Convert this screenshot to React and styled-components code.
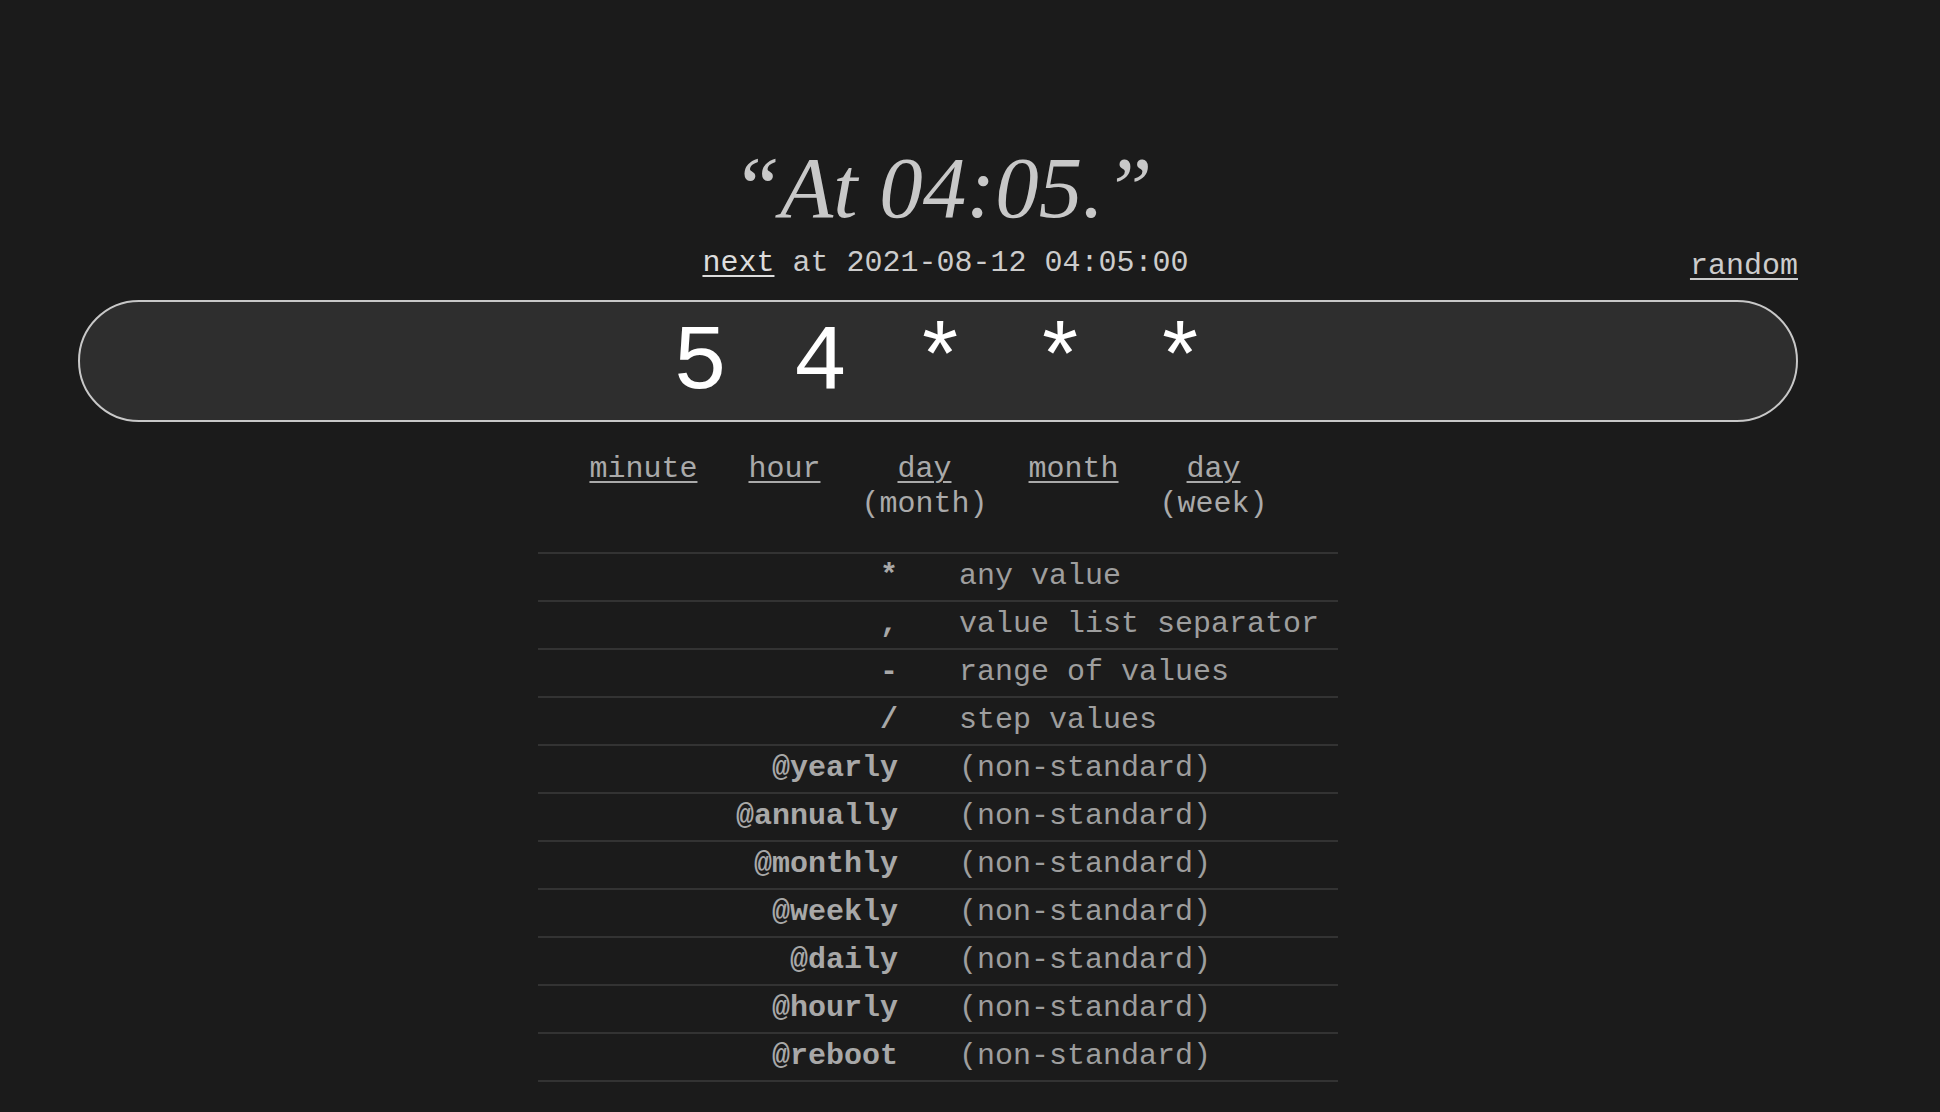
import styled, { createGlobalStyle } from 'styled-components';

const GlobalStyle = createGlobalStyle`
  html, body {
    margin: 0;
    padding: 0;
    background: #1b1b1b;
  }
  body {
    font-family: "Liberation Mono", monospace;
    color: #aaaaaa;
  }
`;

const Page = styled.div`
  padding: 147px 142px 40px 78px;
  min-height: 1112px;
  box-sizing: border-box;
`;

const Title = styled.h1`
  margin: 0 0 16px;
  padding-left: 8px;
  text-align: center;
  font-family: "Liberation Serif", serif;
  font-style: italic;
  font-weight: normal;
  font-size: 87px;
  line-height: 82px;
  color: #c8c8c8;
`;

const NextRow = styled.div`
  display: grid;
  grid-template-columns: 1fr auto 1fr;
  font-size: 30px;
  line-height: 36px;
  color: #cccccc;
  margin-bottom: 16px;
`;

const NextText = styled.div`
  grid-column: 2;
  padding-left: 15px;
  white-space: pre;
`;

const Link = styled.a`
  color: ${(p) => p.$color || '#d6d6d6'};
  text-decoration: underline;
  text-underline-offset: 4px;
  text-decoration-thickness: 2px;
  cursor: pointer;
`;

const RandomCell = styled.div`
  grid-column: 3;
  justify-self: end;
  margin-top: 3px;
`;

const ExprBox = styled.div`
  height: 122px;
  box-sizing: border-box;
  border: 2px solid #c8c8c8;
  border-radius: 61px;
  background: #2e2e2e;
  padding-left: 9px;
  text-align: center;
  font-size: 92px;
  letter-spacing: 4.8px;
  line-height: 124px;
  color: #ffffff;
  white-space: pre;
  overflow: hidden;
`;

const Parts = styled.div`
  display: flex;
  justify-content: center;
  gap: 41px;
  margin-top: 30px;
  padding-right: 19px;
  font-size: 30px;
  line-height: 35px;
  color: #aaaaaa;
`;

const Part = styled.div`
  display: flex;
  flex-direction: column;
  align-items: center;
  margin-right: ${(p) => (p.$extra ? '10px' : '0')};
`;

const Table = styled.table`
  width: 800px;
  margin: 30px auto 0;
  border-collapse: collapse;
  border-top: 2px solid #333333;
  font-size: 30px;
`;

const Row = styled.tr`
  border-bottom: 2px solid #333333;
`;

const Key = styled.th`
  width: 50%;
  padding: 0 40px 2px 0;
  height: 46px;
  box-sizing: border-box;
  text-align: right;
  font-weight: bold;
  line-height: 44px;
  color: #a8a8a8;
`;

const Desc = styled.td`
  padding: 0 0 2px 21px;
  line-height: 44px;
  color: #9e9e9e;
  white-space: pre;
`;

const parts = [
  { label: 'minute', extra: true },
  { label: 'hour' },
  { label: 'day', sub: '(month)' },
  { label: 'month' },
  { label: 'day', sub: '(week)' },
];

const rows = [
  ['*', 'any value'],
  [',', 'value list separator'],
  ['-', 'range of values'],
  ['/', 'step values'],
  ['@yearly', '(non-standard)'],
  ['@annually', '(non-standard)'],
  ['@monthly', '(non-standard)'],
  ['@weekly', '(non-standard)'],
  ['@daily', '(non-standard)'],
  ['@hourly', '(non-standard)'],
  ['@reboot', '(non-standard)'],
];

export default function App() {
  return (
    <>
      <GlobalStyle />
      <Page>
        <Title>“At 04:05.”</Title>
        <NextRow>
          <NextText>
            <Link $color="#dddddd">next</Link> at 2021-08-12 04:05:00
          </NextText>
          <RandomCell>
            <Link $color="#cccccc">random</Link>
          </RandomCell>
        </NextRow>
        <ExprBox>5 4 * * *</ExprBox>
        <Parts>
          {parts.map((p, i) => (
            <Part key={i} $extra={p.extra}>
              <Link $color="#aaaaaa">{p.label}</Link>
              {p.sub && <span>{p.sub}</span>}
            </Part>
          ))}
        </Parts>
        <Table>
          <tbody>
            {rows.map(([k, d]) => (
              <Row key={k}>
                <Key>{k}</Key>
                <Desc>{d}</Desc>
              </Row>
            ))}
          </tbody>
        </Table>
      </Page>
    </>
  );
}
